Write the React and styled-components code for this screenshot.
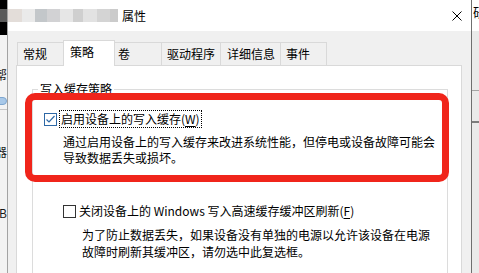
import React from "react";
import styled, { createGlobalStyle } from "styled-components";

const GlobalStyle = createGlobalStyle`
  html, body {
    margin: 0;
    padding: 0;
    background: #f0f0f0;
    overflow: hidden;
  }
  body {
    font-family: "Noto Sans CJK SC", "Microsoft YaHei", sans-serif;
    font-size: 12px;
    color: #000;
  }
`;

const Screen = styled.div`
  display: flex;
  width: 479px;
  height: 273px;
  overflow: hidden;
`;

/* ---------- window behind, left edge ---------- */
const LeftStrip = styled.div`
  flex: none;
  width: 7px;
  display: flex;
  flex-direction: column;
  background: #f3f3f3;
`;

const BlackTop = styled.div`
  height: 35px;
  background: #000;
  padding-top: 9px;
  box-sizing: border-box;
`;

const Smudge = styled.div`
  height: 13px;
  background: ${(p) => p.$color};
`;

const EdgeText = styled.div`
  height: 16px;
  margin-top: ${(p) => p.$top}px;
  display: flex;
  justify-content: ${(p) => (p.$end ? "flex-end" : "flex-start")};
  overflow: hidden;
  white-space: nowrap;
  line-height: 16px;
  font-size: ${(p) => p.$size || 12}px;
  color: #1a1a1a;
`;

const Pill = styled.div`
  height: 8px;
  margin-top: 14px;
  margin-left: -4px;
  border-radius: 4px;
  background: #a8c8e8;
  border: 1px solid #7ea6cf;
  box-sizing: border-box;
`;

const HLine = styled.div`
  height: ${(p) => p.$h || 1}px;
  margin-top: ${(p) => p.$top}px;
  background: ${(p) => p.$color};
`;

/* ---------- the dialog ---------- */
const Dialog = styled.div`
  flex: none;
  width: 465px;
  box-sizing: border-box;
  border-left: 1px solid #a3a3a3;
  border-right: 1px solid #6f6f6f;
  display: flex;
  flex-direction: column;
  background: #f0f0f0;
`;

const TitleBar = styled.div`
  height: 31px;
  flex: none;
  background: #fff;
  display: flex;
  align-items: center;
`;

const Blur = styled.div`
  display: flex;
  height: 13px;
`;

const BlurBlock = styled.div`
  width: ${(p) => p.$w}px;
  background: ${(p) => p.$color};
`;

const TitleText = styled.span`
  margin-left: 4px;
  font-size: 12px;
  line-height: 16px;
`;

const CloseBtn = styled.div`
  margin-left: auto;
  margin-right: 9px;
  display: flex;
`;

const Body = styled.div`
  flex: 1;
  display: flex;
  flex-direction: column;
  padding: 9px 9px 0 8px;
`;

const TabRow = styled.div`
  display: flex;
  align-items: flex-end;
  height: 25px;
  padding-left: 1px;
`;

const Tab = styled.div`
  position: relative;
  z-index: ${(p) => (p.$active ? 1 : 0)};
  width: ${(p) => p.$w}px;
  height: ${(p) => (p.$active ? 26 : 23)}px;
  margin-left: ${(p) => (p.$first ? 0 : -1)}px;
  margin-bottom: ${(p) => (p.$active ? -1 : 0)}px;
  box-sizing: border-box;
  border: 1px solid #d9d9d9;
  border-bottom: none;
  background: ${(p) => (p.$active ? "#fff" : "#f0f0f0")};
  padding-left: ${(p) => p.$pad}px;
  line-height: 22px;
  white-space: nowrap;
`;

const Panel = styled.div`
  position: relative;
  flex: 1;
  background: #fff;
  border: 1px solid #d9d9d9;
  padding: 15px 13px 0 15px;
`;

const Group = styled.fieldset`
  margin: 0;
  padding: 13px 0 0 5px;
  border: 1px solid #dcdcdc;
  min-height: 200px;
`;

const GroupTitle = styled.legend`
  padding: 0 2px;
  font-size: 12px;
  line-height: 16px;
`;

const GroupContent = styled.div`
  padding-left: 6px;
`;

const OptionRow = styled.div`
  display: flex;
  align-items: center;
  height: 18px;
  margin-left: ${(p) => p.$indent}px;
  margin-top: ${(p) => p.$top}px;
`;

const Box = styled.span`
  flex: none;
  width: 13px;
  height: 13px;
  box-sizing: border-box;
  border: 1px solid ${(p) => (p.$checked ? "#2d68a6" : "#333")};
  background: #fff;
  display: flex;
  align-items: center;
  justify-content: center;
`;

const OptionLabel = styled.span`
  margin-left: ${(p) => p.$gap}px;
  padding: 0 1px;
  line-height: 16px;
  border: 1px dotted ${(p) => (p.$focus ? "#000" : "transparent")};
  white-space: nowrap;
`;

const Key = styled.span`
  text-decoration: underline;
  text-underline-offset: 2px;
`;

const Desc = styled.div`
  width: ${(p) => p.$w}px;
  margin-left: ${(p) => p.$indent}px;
  margin-top: ${(p) => p.$top}px;
  line-height: ${(p) => p.$lh}px;
`;

const Annotation = styled.div`
  position: absolute;
  left: 8px;
  top: 27px;
  width: 424px;
  height: 89px;
  box-sizing: border-box;
  border: 7px solid #f0251b;
  border-radius: 10px;
  pointer-events: none;
`;

/* ---------- window behind, right edge ---------- */
const RightStrip = styled.div`
  flex: none;
  width: 7px;
  display: flex;
  flex-direction: column;
  background: #eaeaea;
`;

const RightTop = styled.div`
  height: 31px;
  background: #fff;
  padding-top: 3px;
  box-sizing: border-box;
  overflow: hidden;
  white-space: nowrap;
  font-size: 13px;
  line-height: 17px;
  padding-left: 1px;
`;

function CheckBox({ checked }) {
  return (
    <Box $checked={checked}>
      {checked && (
        <svg width="11" height="11" viewBox="0 0 11 11">
          <polyline
            points="1.5,5.5 4,8 9.5,2"
            fill="none"
            stroke="#2d68a6"
            strokeWidth="1.2"
          />
        </svg>
      )}
    </Box>
  );
}

const blurBlocks = [
  { w: 14, c: "#e3ddd9" },
  { w: 13, c: "#eaeaea" },
  { w: 12, c: "#c3c7ca" },
  { w: 13, c: "#d2d2d4" },
  { w: 13, c: "#e6e6e6" },
  { w: 10, c: "#cfcfcf" },
  { w: 14, c: "#e2e2e2" },
  { w: 13, c: "#d4d4d4" },
  { w: 8, c: "#cbcbcb" },
];

const tabs = [
  { label: "常规", w: 47, pad: 5 },
  { label: "策略", w: 52, pad: 6, active: true },
  { label: "卷", w: 48, pad: 3 },
  { label: "驱动程序", w: 60, pad: 5 },
  { label: "详细信息", w: 61, pad: 6 },
  { label: "事件", w: 47, pad: 5 },
];

export default function App() {
  return (
    <>
      <GlobalStyle />
      <Screen>
        <LeftStrip>
          <BlackTop>
            <Smudge $color="#5a5a5a" />
          </BlackTop>
          <EdgeText $top={32} $end>帮</EdgeText>
          <Pill />
          <HLine $top={4} $color="#c6c6c6" />
          <EdgeText $top={34} $end>器</EdgeText>
          <EdgeText $top={45} $end>B</EdgeText>
        </LeftStrip>

        <Dialog>
          <TitleBar>
            <Blur>
              {blurBlocks.map((b, i) => (
                <BlurBlock key={i} $w={b.w} $color={b.c} />
              ))}
            </Blur>
            <TitleText>属性</TitleText>
            <CloseBtn>
              <svg width="10" height="10" viewBox="0 0 10 10">
                <path d="M0.5 0.5 L9.5 9.5 M9.5 0.5 L0.5 9.5" stroke="#000" strokeWidth="1" />
              </svg>
            </CloseBtn>
          </TitleBar>

          <Body>
            <TabRow>
              {tabs.map((t, i) => (
                <Tab key={t.label} $w={t.w} $pad={t.pad} $active={t.active} $first={i === 0}>
                  {t.label}
                </Tab>
              ))}
            </TabRow>

            <Panel>
              <Group>
                <GroupTitle>写入缓存策略</GroupTitle>
                <GroupContent>
                  <OptionRow $indent={0} $top={0}>
                    <CheckBox checked />
                    <OptionLabel $gap={2} $focus>
                      启用设备上的写入缓存(<Key>W</Key>)
                    </OptionLabel>
                  </OptionRow>
                  <Desc $w={378} $indent={19} $top={6} $lh={16}>
                    通过启用设备上的写入缓存来改进系统性能，但停电或设备故障可能会导致数据丢失或损坏。
                  </Desc>

                  <OptionRow $indent={19} $top={36}>
                    <CheckBox />
                    <OptionLabel $gap={1}>
                      关闭设备上的 Windows 写入高速缓存缓冲区刷新(<Key>F</Key>)
                    </OptionLabel>
                  </OptionRow>
                  <Desc $w={354} $indent={38} $top={6} $lh={17}>
                    为了防止数据丢失，如果设备没有单独的电源以允许该设备在电源故障时刷新其缓冲区，请勿选中此复选框。
                  </Desc>
                </GroupContent>
              </Group>
              <Annotation />
            </Panel>
          </Body>
        </Dialog>

        <RightStrip>
          <RightTop>研</RightTop>
          <HLine $top={59} $color="#a5a5a5" />
          <HLine $top={30} $h={2} $color="#7c7c7c" />
        </RightStrip>
      </Screen>
    </>
  );
}
